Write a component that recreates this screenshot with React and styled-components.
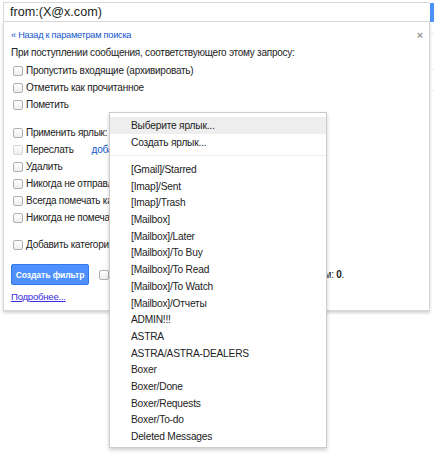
import React from 'react';
import styled, { createGlobalStyle } from 'styled-components';

const GlobalStyle = createGlobalStyle`
  html, body {
    margin: 0;
    padding: 0;
    background: #fff;
  }
  body {
    font-family: 'Liberation Sans', Arial, sans-serif;
    font-size: 10px;
    letter-spacing: -0.25px;
    color: #222;
  }
`;

const Page = styled.div`
  position: relative;
  display: flex;
  width: 434px;
  height: 475px;
  padding-top: 2px;
  box-sizing: border-box;
  overflow: hidden;
`;

const Gutter = styled.div`
  width: 3px;
  flex: none;
`;

const MainCol = styled.div`
  width: 427px;
  flex: none;
  display: flex;
  flex-direction: column;
`;

const SideCol = styled.div`
  flex: 1;
  display: flex;
  flex-direction: column;
`;

const SearchBox = styled.div`
  height: 20px;
  box-sizing: border-box;
  border: 1px solid #d9d9d9;
  border-right: none;
  padding-left: 6px;
  font-size: 12.6px;
  letter-spacing: 0;
  line-height: 19px;
  color: #222;
`;

const SearchButton = styled.div`
  height: 19px;
  margin-top: 1px;
  background: #4d90fe;
`;

const SideLine = styled.div`
  height: ${(p) => p.$h}px;
  border-bottom: 1px solid #e5e5e5;
`;

const Panel = styled.div`
  border: 1px solid #d6d6d6;
  border-top: none;
  box-shadow: 0 2px 3px rgba(0, 0, 0, 0.18);
  padding: 6px 6px 6px 7px;
  background: #fff;
`;

const BackRow = styled.div`
  display: flex;
  justify-content: space-between;
  align-items: center;
  height: 14px;
`;

const BackLink = styled.a`
  color: #15c;
  text-decoration: none;
  font-size: 9.2px;
`;

const Close = styled.span`
  color: #999;
  font-size: 11px;
  font-weight: bold;
  line-height: 14px;
`;

const Heading = styled.div`
  margin: 4px 0 2px;
  line-height: 14px;
`;

const Group = styled.div`
  display: flex;
  flex-direction: column;
  margin-top: ${(p) => p.$gap || 0}px;
`;

const Row = styled.label`
  display: flex;
  align-items: center;
  height: 17px;
  padding-left: 2px;
  white-space: nowrap;
`;

const Box = styled.span`
  display: inline-block;
  width: 8px;
  height: 8px;
  margin-right: 3px;
  border: 1px solid ${(p) => (p.$disabled ? '#d8d8d8' : '#b0b0b0')};
  border-radius: 2px;
  background: linear-gradient(#fff, #ededed);
  flex: none;
`;

const InlineLink = styled.a`
  color: #15c;
  text-decoration: none;
  margin-left: 18px;
`;

const ActionRow = styled.div`
  display: flex;
  align-items: center;
  margin-top: 11px;
  white-space: nowrap;
`;

const PrimaryButton = styled.button`
  width: 78px;
  height: 21px;
  padding: 0;
  border: 1px solid #3079ed;
  border-radius: 2px;
  background: #4d90fe;
  color: #fff;
  font-family: 'Liberation Sans', Arial, sans-serif;
  font-size: 8.6px;
  letter-spacing: -0.1px;
  font-weight: bold;
  margin-right: 10px;
`;

const MoreLink = styled.a`
  display: block;
  margin-top: 5px;
  line-height: 14px;
  font-size: 9.6px;
  color: #3a2ce0;
  text-decoration: underline;
`;

const Menu = styled.div`
  position: absolute;
  left: 109px;
  top: 112px;
  width: 218px;
  height: 336px;
  box-sizing: border-box;
  padding-top: 4px;
  border: 1px solid rgba(0, 0, 0, 0.2);
  background: #fff;
  box-shadow: 0 2px 4px rgba(0, 0, 0, 0.2);
  font-size: 10.2px;
  letter-spacing: -0.2px;
`;

const MenuItem = styled.div`
  height: ${(p) => p.$h || 17}px;
  line-height: ${(p) => p.$h || 17}px;
  padding-left: 21px;
  color: #222;
  white-space: nowrap;
  background: ${(p) => (p.$active ? '#eee' : 'transparent')};
`;

const Separator = styled.div`
  margin: 4px 0 6px;
  border-top: 1px solid #ebebeb;
`;

const labels = [
  '[Gmail]/Starred',
  '[Imap]/Sent',
  '[Imap]/Trash',
  '[Mailbox]',
  '[Mailbox]/Later',
  '[Mailbox]/To Buy',
  '[Mailbox]/To Read',
  '[Mailbox]/To Watch',
  '[Mailbox]/Отчеты',
  'ADMIN!!!',
  'ASTRA',
  'ASTRA/ASTRA-DEALERS',
  'Boxer',
  'Boxer/Done',
  'Boxer/Requests',
  'Boxer/To-do',
  'Deleted Messages',
];

const App = () => (
  <Page>
    <GlobalStyle />
    <Gutter />
    <MainCol>
      <SearchBox>from:(X@x.com)</SearchBox>
      <Panel>
        <BackRow>
          <BackLink href="#">« Назад к параметрам поиска</BackLink>
          <Close>×</Close>
        </BackRow>
        <Heading>При поступлении сообщения, соответствующего этому запросу:</Heading>
        <Group>
          <Row><Box />Пропустить входящие (архивировать)</Row>
          <Row><Box />Отметить как прочитанное</Row>
          <Row><Box />Пометить</Row>
        </Group>
        <Group $gap={11}>
          <Row><Box />Применить ярлык:</Row>
          <Row>
            <Box $disabled />Переслать
            <InlineLink href="#">добавить адрес пересылки</InlineLink>
          </Row>
          <Row><Box />Удалить</Row>
          <Row><Box />Никогда не отправлять в спам</Row>
          <Row><Box />Всегда помечать как важное</Row>
          <Row><Box />Никогда не помечать как важное</Row>
        </Group>
        <Group $gap={10}>
          <Row><Box />Добавить категорию:</Row>
        </Group>
        <ActionRow>
          <PrimaryButton>Создать фильтр</PrimaryButton>
          <Box />
          <span>
            Применить фильтр к найденным цепочкам писем: <b>0</b>.
          </span>
        </ActionRow>
        <MoreLink href="#">Подробнее...</MoreLink>
      </Panel>
    </MainCol>
    <SideCol>
      <SearchButton />
      <SideLine $h={11} />
      <SideLine $h={35} />
      <SideLine $h={20} />
    </SideCol>
    <Menu>
      <MenuItem $active>Выберите ярлык...</MenuItem>
      <MenuItem>Создать ярлык...</MenuItem>
      <Separator />
      {labels.map((l) => (
        <MenuItem key={l} $h={16.7}>{l}</MenuItem>
      ))}
    </Menu>
  </Page>
);

export default App;
